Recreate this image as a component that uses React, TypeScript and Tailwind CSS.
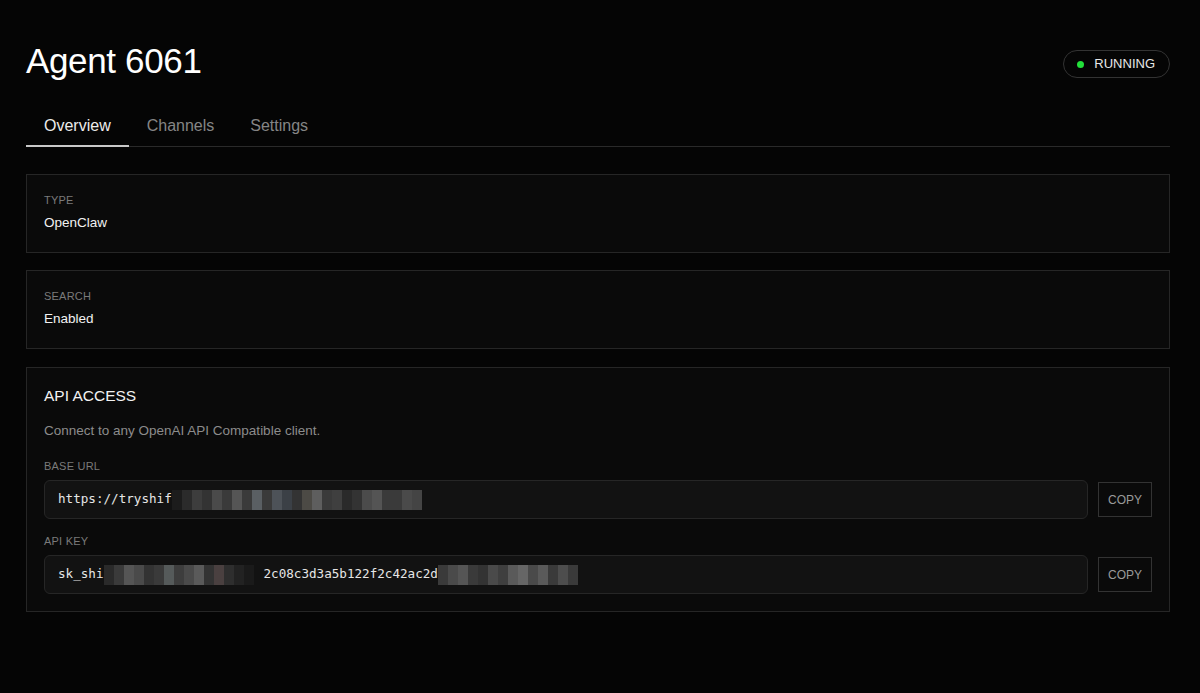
import React from "react";

const SANS = { fontFamily: '"Liberation Sans", Arial, sans-serif' } as React.CSSProperties;
const MONO = { fontFamily: '"DejaVu Sans Mono", "Liberation Mono", monospace' } as React.CSSProperties;

function Pixels({ colors }: { colors: string[] }) {
  return (
    <span className="inline-flex h-[20px] items-stretch align-middle">
      {colors.map((c, i) => (
        <span key={i} className="block w-[10px]" style={{ backgroundColor: c }} />
      ))}
    </span>
  );
}

function Field({ label, children }: { label: string; children: React.ReactNode }) {
  return (
    <div>
      <div className="text-[11px] leading-4 uppercase text-[#7a7a7a] tracking-[0.02em]">{label}</div>
      <div className="mt-[6px] flex items-center gap-[10px]">
        <div
          className="flex h-[39px] flex-1 items-center overflow-hidden rounded-[6px] border border-[#262626] bg-[#121212] pl-[13px] text-[12.6px] text-[#e6e6e6]"
          style={MONO}
        >
          {children}
        </div>
        <button className="h-[35px] w-[54px] border border-[#333] bg-[#0a0a0a] text-[12px] text-[#9a9a9a]">
          COPY
        </button>
      </div>
    </div>
  );
}

function InfoCard({ label, value }: { label: string; value: string }) {
  return (
    <div className="border border-[#262626] bg-[#0a0a0a] px-[17px] pt-[17px] pb-[19px]">
      <div className="text-[11px] leading-4 uppercase text-[#7a7a7a] tracking-[0.02em]">{label}</div>
      <div className="mt-[5px] text-[13.5px] leading-5 text-[#f2f2f2]">{value}</div>
    </div>
  );
}

export default function App() {
  const urlPix = [
    "#1c1c1c", "#2b2b2b", "#3d3d3d", "#333", "#4a4a4a", "#3a3a3a", "#555", "#3a3a3a",
    "#5a5f63", "#3a3a3a", "#4d5258", "#3b4046", "#333", "#4c4a45", "#5e5e5e", "#3a3a3a", "#3f3f3f",
    "#2a2a2a", "#333", "#4b4b4b", "#545454", "#3a3a3a", "#3a3a3a", "#4a4a4a", "#444",
  ];
  const keyPix1 = [
    "#2a2a2a", "#3a3a3a", "#555", "#4a4a4a", "#333", "#3a3a3a", "#555a5a", "#3d3d3d", "#4a4a4a",
    "#5a5a5a", "#333", "#4a4040", "#2e2e2e", "#222", "#1a1a1a",
  ];
  const keyPix2 = [
    "#3a3a3a", "#4a4a4a", "#555", "#3a3a3a", "#333", "#4a4a4a", "#3f3f3f", "#5a5a5a", "#666", "#4a4a4a",
    "#5a5a5a", "#3a3a3a", "#4d4d4d", "#3a3a3a",
  ];

  return (
    <div className="min-h-screen bg-[#050505] pl-[26px] pr-[30px] text-white" style={SANS}>
      <div className="flex items-start justify-between pt-[41px]">
        <h1 className="text-[35px] leading-10 font-normal tracking-[-0.01em] text-white">Agent 6061</h1>
        <div className="mt-[9px] flex h-[28px] items-center rounded-full border border-[#333] pl-[13px] pr-[14px]">
          <span className="h-[7px] w-[7px] rounded-full bg-[#22e03a]" />
          <span className="ml-[10px] text-[13px] text-[#e8e8e8]">RUNNING</span>
        </div>
      </div>

      <div className="mt-[22px] flex border-b border-[#2a2a2a]">
        <div className="-mb-px border-b-2 border-[#c8c8c8] px-[18px] pt-[11px] pb-[6px] text-[16px] leading-6 text-[#ececec]">
          Overview
        </div>
        <div className="px-[18px] pt-[11px] pb-[8px] text-[16px] leading-6 text-[#858585]">Channels</div>
        <div className="px-[18px] pt-[11px] pb-[8px] text-[16px] leading-6 text-[#858585]">Settings</div>
      </div>

      <div className="mt-[27px] flex flex-col gap-[17px]">
        <InfoCard label="Type" value="OpenClaw" />
        <InfoCard label="Search" value="Enabled" />

        <div className="mt-px border border-[#262626] bg-[#0a0a0a] px-[17px] pt-[17px] pb-[17px]">
          <div className="text-[15.5px] leading-[22px] text-[#f2f2f2]">API ACCESS</div>
          <div className="mt-[14px] text-[13.5px] leading-5 text-[#8c8c8c]">
            Connect to any OpenAI API Compatible client.
          </div>
          <div className="mt-[17px] flex flex-col gap-[14px]">
            <Field label="Base URL">
              <span>https://tryshif</span>
              <Pixels colors={urlPix} />
            </Field>
            <Field label="API Key">
              <span>sk_shi</span>
              <Pixels colors={keyPix1} />
              <span className="ml-[10px]">2c08c3d3a5b122f2c42ac2d</span>
              <Pixels colors={keyPix2} />
            </Field>
          </div>
        </div>
      </div>
    </div>
  );
}
